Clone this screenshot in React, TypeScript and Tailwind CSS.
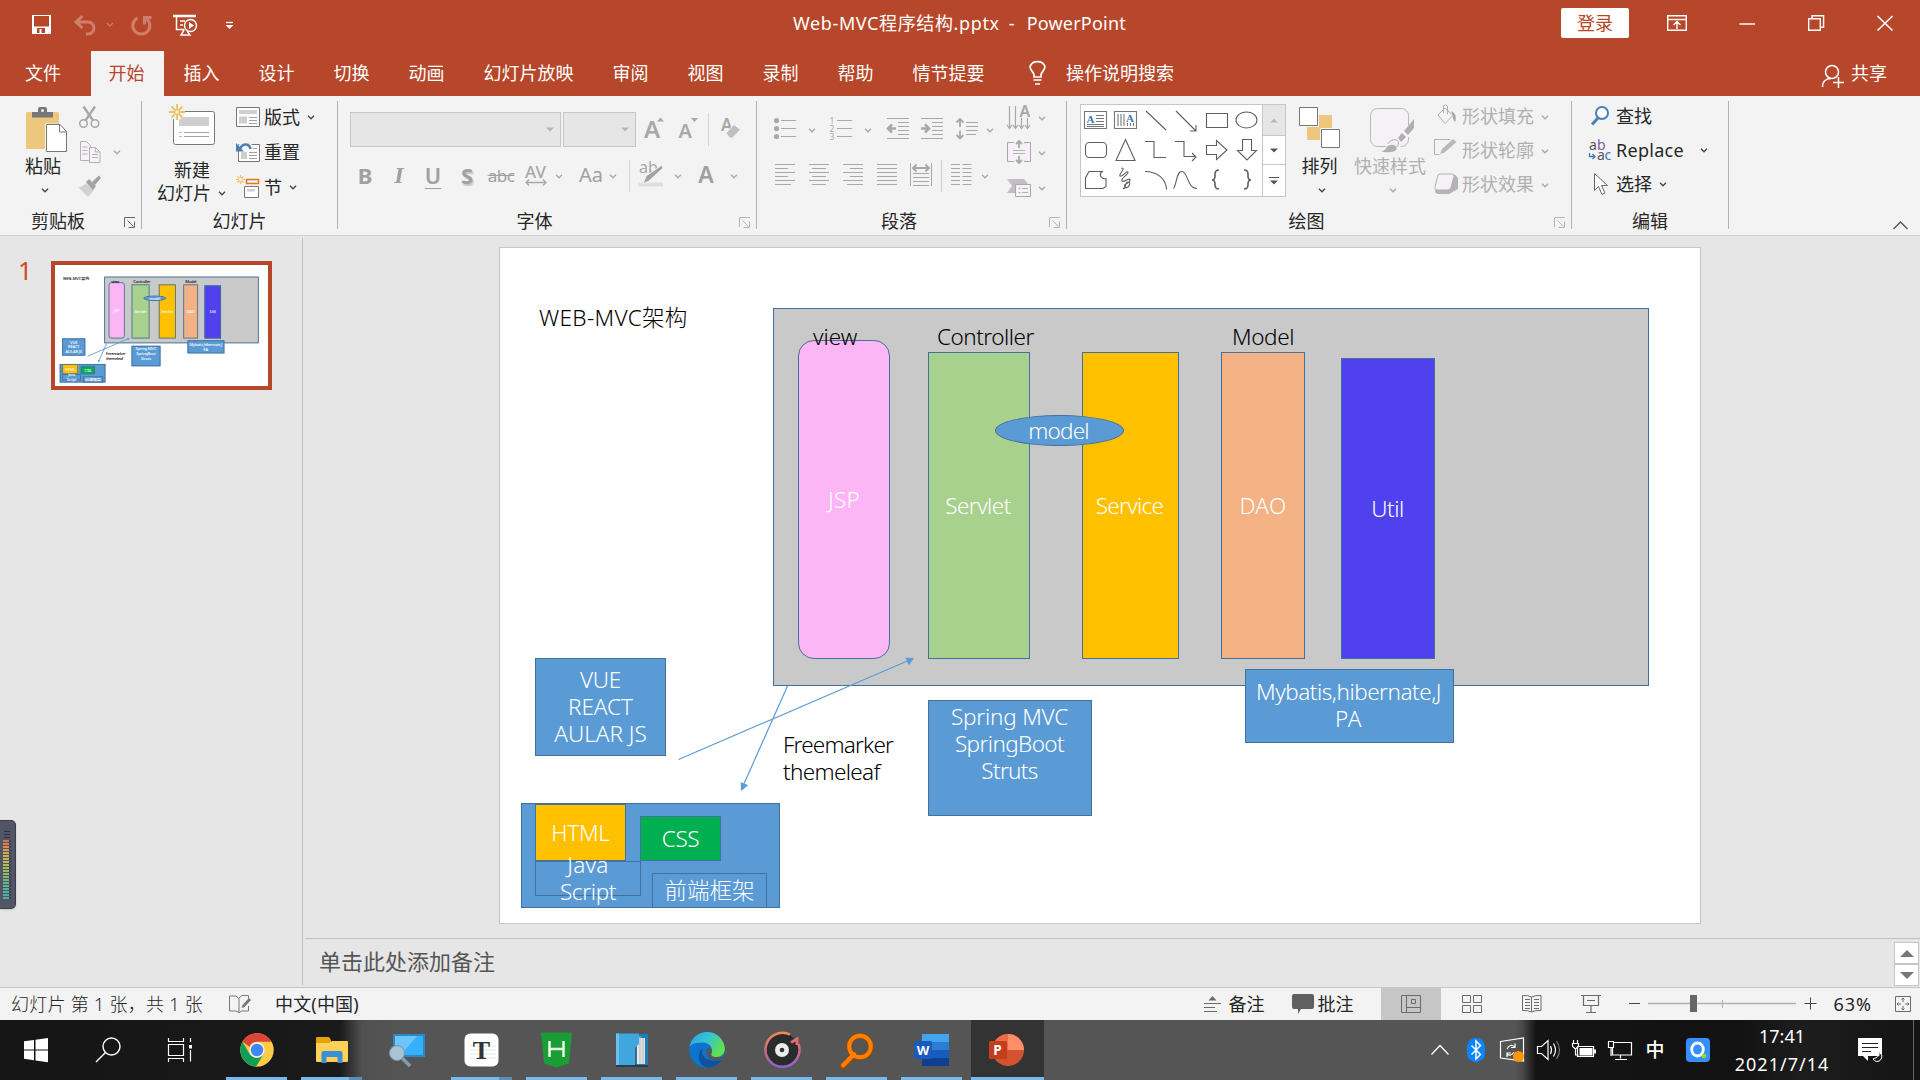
import React, { useLayoutEffect, useRef, useState } from 'react';

type Box = [number, number, number, number];

/* Icon whose drawing units are window pixels: b = [left, top, width, height]. */
function Ic({ b, className = '', children }: { b: Box; className?: string; children: React.ReactNode }) {
  return (
    <svg width={b[2]} height={b[3]} viewBox={b.join(' ')} fill="none" className={`block shrink-0 overflow-visible ${className}`}>
      {children}
    </svg>
  );
}

/* Single line of text tracked so that it fills the given width. */
function Fit({ w, children, className = '' }: { w: number; children: string; className?: string }) {
  const ref = useRef<HTMLSpanElement>(null);
  const [ls, setLs] = useState(0);
  useLayoutEffect(() => {
    if (ref.current && ls === 0) setLs((w - ref.current.offsetWidth) / children.length);
  }, []);
  return (
    <span ref={ref} style={{ letterSpacing: `${ls}px` }} className={`inline-block whitespace-pre ${className}`}>
      {children}
    </span>
  );
}

function Chev({ c = '#444', className = '' }: { c?: string; className?: string }) {
  return (
    <svg width="8" height="5" viewBox="0 0 8 5" fill="none" stroke={c} strokeWidth="1.3" className={`block shrink-0 ${className}`}>
      <path d="M1 .8 4 3.8 7 .8" />
    </svg>
  );
}

const G = '#a8a8a8';

function Group({ label, width, launcher, dim, children }: { label: string; width: string; launcher?: boolean; dim?: boolean; children: React.ReactNode }) {
  return (
    <>
      <div className={`flex shrink-0 flex-col ${width}`}>
        <div className="flex h-[114px] items-start">{children}</div>
        <div className="flex h-6 items-center">
          <div className="flex-1 pb-px text-center leading-[23px]">{label}</div>
          {launcher && (
            <svg width="25" height="14" viewBox="0 0 25 14" fill="none" stroke={dim ? '#b5b5b5' : '#666'} className="shrink-0">
              <path d="M8.500 12V2.500H19M11.500 5.500l6 6M18.500 6.500v6h-6" />
            </svg>
          )}
        </div>
      </div>
      <div className="mt-[5px] h-32 w-px shrink-0 bg-[#b3b3b3]" />
    </>
  );
}

function TitleBar() {
  return (
    <div className="flex h-[51px] items-start text-white">
      <div className="flex h-[50px] w-[793px] items-start">
        <Ic b={[30, 13, 23, 23]} className="mt-[13px] ml-[30px]">
          <path d="M32 15h19v19H32z" fill="#fff" />
          <path d="M34 16h15v10.500H34zM37 28h8v5h-8z" fill="#b7472a" />
          <path d="M39.500 29h2v4h-2z" fill="#fff" />
        </Ic>
        <Ic b={[72, 13, 42, 24]} className="mt-[13px] ml-[19px]">
          <g stroke="#cf7f6b" strokeWidth="3">
            <path d="M76 22h12a6 6 0 0 1 0 12h-2M82.500 16 76 22l6.500 6" />
            <path d="m107 23 3 3 3-3" strokeWidth="1.200" />
          </g>
        </Ic>
        <Ic b={[130, 13, 24, 24]} className="mt-[13px] ml-4">
          <path d="M137.500 18a8.500 8.500 0 1 0 8.500.5M151.500 17.500h-7v7" stroke="#cf7f6b" strokeWidth="3" />
        </Ic>
        <Ic b={[172, 13, 28, 26]} className="mt-[13px] ml-[18px]">
          <g stroke="#fff" strokeWidth="1.500">
            <path d="M173 16h23" strokeWidth="2.500" />
            <path d="M176.500 17v12.500h8M180 21h5M180 25h3M184 30l-3 5h9l-3-4" />
            <circle cx="190.500" cy="25.500" r="6" />
            <path d="m189 22 5 3.500-5 3.500z" fill="#fff" stroke="none" />
          </g>
        </Ic>
        <Ic b={[224, 18, 12, 12]} className="mt-[18px] ml-6">
          <path d="M226 22.500h7" stroke="#fff" strokeWidth="1.300" />
          <path d="M225.500 25h8l-4 4z" fill="#fff" />
        </Ic>
      </div>
      <div className="mt-[11px] flex leading-6">
        <Fit w={207}>Web-MVC程序结构.pptx</Fit>
        <span className="ml-[9px] w-[18px]">-</span>
        <Fit w={99}>PowerPoint</Fit>
      </div>
      <div className="mt-2 ml-auto flex h-[30px] w-[68px] items-center justify-center rounded-[2px] bg-white text-[#b7472a]">登录</div>
      <Ic b={[1666, 13, 22, 20]} className="mt-[13px] ml-[37px]">
        <g stroke="#fff" strokeWidth="1.400">
          <path d="M1667.700 15.700h18.600v14.600h-18.600zM1668 19.500h18M1677 29v-7M1673.500 25l3.500-3.500 3.500 3.500" />
        </g>
      </Ic>
      <Ic b={[1738, 13, 18, 20]} className="mt-[13px] ml-[50px]">
        <path d="M1739.500 24h15.500" stroke="#fff" strokeWidth="1.500" />
      </Ic>
      <Ic b={[1807, 13, 20, 20]} className="mt-[13px] ml-[51px]">
        <path d="M1808.700 18.700h11.600v11.600h-11.600zM1812 18.500v-2.800h11.600v11.600h-3" stroke="#fff" strokeWidth="1.400" />
      </Ic>
      <Ic b={[1876, 13, 20, 20]} className="mt-[13px] mr-6 ml-[49px]">
        <path d="m1877.500 16 15 14.500M1892.500 16l-15 14.500" stroke="#fff" strokeWidth="1.600" />
      </Ic>
    </div>
  );
}

const TABS = ['插入', '设计', '切换', '动画', '幻灯片放映', '审阅', '视图', '录制', '帮助', '情节提要'];

function Tabs() {
  return (
    <div className="flex h-[45px] items-stretch text-white">
      <div className="flex w-[91px] items-center pb-px pl-[25px]">文件</div>
      <div className="flex w-[73px] items-center justify-center bg-[#f3f3f3] pr-0.5 pb-px text-[#b7472a]">开始</div>
      <div className="flex">
        {TABS.map((t) => (
          <div key={t} className="flex items-center px-[19.5px] pb-px">{t}</div>
        ))}
      </div>
      <Ic b={[1026, 58, 22, 30]} className="mt-[7px] ml-[22px]">
        <g stroke="#fff" strokeWidth="1.700">
          <path d="M1034 77v-2c0-3-4-4.500-4-8.500a8 7.500 0 0 1 15 0c0 4-4 5.500-4 8.500v2zM1033.500 80h8M1035 84h5" />
        </g>
      </Ic>
      <div className="ml-[18px] flex items-center pb-px">操作说明搜索</div>
      <Ic b={[1821, 62, 26, 28]} className="mt-[11px] ml-auto">
        <g stroke="#fff" strokeWidth="1.500">
          <circle cx="1832" cy="72" r="6.500" />
          <path d="M1822.500 87c0-6 4-8.500 8.500-8.500M1838.500 77v11M1833 82.500h11" />
        </g>
      </Ic>
      <div className="mr-[33px] ml-1 flex items-center pb-px">共享</div>
    </div>
  );
}

function ClipboardGroup() {
  return (
    <Group label="剪贴板" width="w-[141px]" launcher>
      <div className="ml-4 flex w-14 flex-col items-center pt-2">
        <Ic b={[20, 104, 48, 50]}>
          <rect x="26" y="112" width="33" height="37" rx="1.500" fill="#eec77f" />
          <path d="M32 112h6v-3q0-2 2-2h5q2 0 2 2v3h6v5.500H32z" fill="#777" />
          <circle cx="42.500" cy="110.500" r="1.500" fill="#f3f3f3" />
          <path d="M45 123.500h15l7.500 7.500v22H45z" fill="#f3f3f3" />
          <path d="M46.500 124.500H60l6.500 7v20H46.500z" fill="#fff" stroke="#777" />
          <path d="M59.500 124.500v7.500h7" stroke="#777" />
        </Ic>
        <div className="pr-0.5 leading-6">粘贴</div>
        <Chev className="mt-[10px] ml-0.5" />
      </div>
      <div className="ml-[5px] flex flex-col pt-2">
        <Ic b={[77, 104, 26, 26]}>
          <g stroke={G} strokeWidth="1.500">
            <circle cx="83.500" cy="123.500" r="3.800" />
            <circle cx="95" cy="123.500" r="3.800" />
            <path d="m83.500 106.500 9.500 14M95 106.500l-9.500 14" strokeWidth="2.300" />
          </g>
        </Ic>
        <div className="mt-[9px] flex items-center gap-[10px]">
          <Ic b={[77, 139, 26, 26]}>
            <g stroke="#b5b0b5" fill="#f6f1f7">
              <path d="M80.500 141.500h6l4 4v15h-10zM82.500 147h5M82.500 150.500h5M82.500 154h5" />
              <path d="M89.500 147.500h6l4.500 4.500v10.500H89.500zM95.500 148v4h4M92 154.500h6M92 157.500h6" />
            </g>
          </Ic>
          <Chev c={G} />
        </div>
        <Ic b={[77, 175, 26, 26]} className="mt-[10px]">
          <path d="M78 187q5 0 8-4l8 7-6 7z" fill="#d6d0d6" />
          <path d="m86 182 3-3 7 7-3 4z" fill="#a2a2a2" />
          <path d="m92 182 7-6.500 2 2.500-6 7z" fill="#a2a2a2" />
        </Ic>
      </div>
    </Group>
  );
}

function SlidesGroup() {
  return (
    <Group label="幻灯片" width="w-[195px]">
      <div className="ml-[15px] flex w-[72px] flex-col items-center pt-1.5">
        <Ic b={[168, 102, 50, 46]}>
          <rect x="173.500" y="111.500" width="41" height="33" rx="2" fill="#fff" stroke="#777" />
          <path d="M179 117h30v9h-30z" fill="#cfcfcf" />
          <path d="M179.500 132.500h2M184 132.500h25M179.500 136.500h2M184 136.500h25" stroke="#a2a2a2" />
          <circle cx="177" cy="112" r="8" fill="#f3f3f3" />
          <path d="M177 104v5M177 115v5M169 112h5M180 112h5M171.500 106.500l3 3M179.500 114.500l3 3M182.500 106.500l-3 3M174.500 114.500l-3 3" stroke="#eec06a" strokeWidth="1.800" />
          <circle cx="177" cy="112" r="2.500" stroke="#eec06a" strokeWidth="1.500" />
        </Ic>
        <div className="mt-[11px] pr-0.5 leading-[23px]">新建</div>
        <div className="flex items-center gap-[7px] pr-[3px] leading-[23px]">
          幻灯片
          <Chev />
        </div>
      </div>
      <div className="ml-[7px] flex flex-col gap-[11px] pt-[9px]">
        <div className="flex h-6 items-center">
          <Ic b={[236, 105, 24, 24]}>
            <path d="M236.500 107.500h23v19h-23z" fill="#fff" stroke="#777" />
            <path d="M239 110h18v4h-18zM239 116.500h8v7h-8z" fill="#cfcfcf" />
            <path d="M249 117.500h8M249 120.500h8M249 123.500h8" stroke="#a2a2a2" />
          </Ic>
          <span className="ml-1">版式</span>
          <Chev className="ml-[7px]" />
        </div>
        <div className="flex h-6 items-center">
          <Ic b={[236, 140, 24, 24]}>
            <path d="M238.500 144.500h21v17h-21z" fill="#fff" stroke="#777" />
            <path d="M241 152h6v7h-6z" fill="#cfcfcf" />
            <path d="M250 148.500h7M249 152.500h8M249 155.500h8M249 158.500h8" stroke="#a2a2a2" />
            <path d="M250.500 149c-1-5-7-6-11 0" stroke="#f3f3f3" strokeWidth="6" />
            <path d="M250.500 149c-1-6-8-6.500-11 .5" stroke="#4a80b5" strokeWidth="2.500" />
            <path d="M236 143v8.500h8z" fill="#4a80b5" />
          </Ic>
          <span className="ml-1">重置</span>
        </div>
        <div className="flex h-6 items-center">
          <Ic b={[236, 175, 24, 24]}>
            <path d="M246.500 179.500h12v4h-12z" stroke="#e07a1e" strokeWidth="1.500" />
            <path d="M244.500 186.500h14v11h-14z" fill="#fff" stroke="#777" />
            <path d="M247 189h8v2.500h-8z" fill="#cfcfcf" />
            <path d="M240.500 175v3M240.500 181v3M236 179.500h3M242 179.500h3M237.500 176.500l2 2M241.500 180.500l2 2M243.500 176.500l-2 2M239.500 180.500l-2 2" stroke="#eec06a" strokeWidth="1.200" />
          </Ic>
          <span className="ml-1">节</span>
          <Chev className="ml-[7px]" />
        </div>
      </div>
    </Group>
  );
}

function Combo({ width }: { width: string }) {
  return (
    <div className={`flex h-[35px] items-center justify-end border border-[#c6c6c6] bg-[#e6e6e6] pr-1.5 ${width}`}>
      <svg width="8" height="5" viewBox="0 0 8 5"><path d="M0 .5h8l-4 4z" fill="#b5b5b5" /></svg>
    </div>
  );
}

function FontGroup() {
  return (
    <Group label="字体" width="w-[418px]" launcher dim>
      <div className="flex flex-col pt-4 text-[#a0a0a0]">
        <div className="flex h-[35px] items-start pl-3">
          <Combo width="w-[211px]" />
          <div className="w-0.5" />
          <Combo width="w-[73px]" />
          <Ic b={[642, 112, 24, 35]} className="ml-1.5">
            <text x="644" y="138" fontSize="24" fontWeight="600" fill={G} fontFamily="Noto Sans">A</text>
            <path d="M657 121.500h7l-3.500-4z" fill={G} />
          </Ic>
          <Ic b={[676, 112, 24, 35]} className="ml-2.5">
            <text x="678.500" y="138" fontSize="20" fontWeight="600" fill={G} fontFamily="Noto Sans">A</text>
            <path d="M691 118h7l-3.500 4z" fill={G} />
          </Ic>
          <div className="mt-px ml-2 h-[33px] w-px bg-[#d4d4d4]" />
          <Ic b={[719, 112, 24, 35]} className="ml-2.5">
            <text x="721" y="131" fontSize="17" fontWeight="600" fill={G} fontFamily="Noto Sans">A</text>
            <path d="m726 133 8-8.500 6.500 5-8 8.500h-3z" fill="#c2bdc2" stroke="#f3f3f3" />
          </Ic>
        </div>
        <div className="mt-[13px] flex h-8 items-center pl-2.5 text-[22px] leading-none">
          <span className="w-[34px] pb-[3px] text-center font-bold">B</span>
          <span className="w-[34px] pb-[3px] text-center font-['Liberation_Serif'] text-[24px] font-bold italic">I</span>
          <span className="w-[34px] pb-[3px] text-center font-semibold underline decoration-1 underline-offset-4">U</span>
          <span className="w-[34px] pb-[3px] text-center font-bold [text-shadow:1.5px_1.5px_1px_#c8c8c8]">S</span>
          <span className="w-[34px] pb-0.5 text-center text-[17px] tracking-[-0.5px] line-through">abc</span>
          <Ic b={[518, 160, 34, 32]}>
            <text x="525" y="178" fontSize="17" fontWeight="500" fill={G} fontFamily="Noto Sans" textLength="21">AV</text>
            <path d="M526 182.500h20M529 179.500l-3 3 3 3M543 179.500l3 3-3 3" stroke={G} strokeWidth="1.300" />
          </Ic>
          <Chev c={G} className="ml-[3px]" />
          <span className="ml-[13px] w-[30px] pb-0.5 text-center text-[20px]">Aa</span>
          <Chev c={G} className="ml-[3px]" />
          <div className="ml-[12px] h-8 w-px bg-[#d4d4d4]" />
          <Ic b={[638, 160, 28, 32]} className="ml-2">
            <text x="639" y="173" fontSize="16" fill={G} fontFamily="Noto Sans">ab</text>
            <path d="M638 182.500h25v4h-25z" fill="#e3dce3" />
            <path d="m643 184 3-8 16-11 1 3-14 13z" fill="#a2a2a2" stroke="#f3f3f3" />
          </Ic>
          <Chev c={G} className="ml-2" />
          <span className="ml-3 w-6 pb-[3px] text-center text-[23px] font-semibold">A</span>
          <Chev c={G} className="ml-3" />
        </div>
      </div>
    </Group>
  );
}

function ParagraphGroup() {
  return (
    <Group label="段落" width="w-[309px]" launcher dim>
      <div className="ml-[15px] flex w-[228px] flex-col pt-4">
        <div className="flex h-9 items-center">
          <Ic b={[772, 112, 26, 34]}>
            <path d="M781 119.500h15M781 127.500h15M781 135.500h15" stroke={G} />
            <circle cx="776.500" cy="119.500" r="2.600" fill={G} />
            <circle cx="776.500" cy="127.500" r="2.600" fill={G} />
            <circle cx="776.500" cy="135.500" r="2.600" fill={G} />
          </Ic>
          <Chev c={G} className="ml-2.5" />
          <Ic b={[828, 112, 26, 34]} className="ml-3">
            <path d="M837 119.500h15M837 127.500h15M837 135.500h15" stroke={G} />
            <g fontSize="8.500" fill={G} fontFamily="Noto Sans">
              <text x="829.500" y="123">1</text>
              <text x="829.500" y="131">2</text>
              <text x="829.500" y="139">3</text>
            </g>
          </Ic>
          <Chev c={G} className="ml-2.5" />
          <Ic b={[884, 112, 26, 34]} className="ml-3">
            <path d="M887 117.500h22M898 121.500h11M898 125.500h11M898 129.500h11M898 133.500h11M887 137.500h22" stroke={G} />
            <path d="M896 127.500h-8M892 123.500l-4 4 4 4" stroke={G} strokeWidth="2.500" />
          </Ic>
          <Ic b={[918, 112, 26, 34]} className="ml-2">
            <path d="M921 117.500h22M932 121.500h11M932 125.500h11M932 129.500h11M932 133.500h11M921 137.500h22" stroke={G} />
            <path d="M921 127.500h8M925 123.500l4 4-4 4" stroke={G} strokeWidth="2.500" />
          </Ic>
          <Ic b={[954, 112, 26, 34]} className="ml-2.5">
            <path d="M966 121.500h12M966 125.500h12M966 129.500h12M966 133.500h10" stroke={G} />
            <path d="M960 118v8M956.500 121.500l3.500-3.500 3.500 3.500M960 129.500v8M956.500 134l3.500 3.500 3.500-3.500" stroke={G} strokeWidth="1.800" />
          </Ic>
          <Chev c={G} className="ml-1.5" />
        </div>
        <div className="mt-3 flex h-8 items-center">
          <Ic b={[772, 160, 24, 32]}><path d="M775 164.500h20M775 168.500h13M775 172.500h20M775 176.500h13M775 180.500h20M775 184.500h16" stroke={G} /></Ic>
          <Ic b={[806, 160, 24, 32]} className="ml-2.5"><path d="M809 164.500h20M812 168.500h14M809 172.500h20M812 176.500h14M809 180.500h20M812 184.500h14" stroke={G} /></Ic>
          <Ic b={[840, 160, 24, 32]} className="ml-2.5"><path d="M843 164.500h20M850 168.500h13M843 172.500h20M850 176.500h13M843 180.500h20M847 184.500h16" stroke={G} /></Ic>
          <Ic b={[874, 160, 24, 32]} className="ml-2.5"><path d="M877 164.500h20M877 168.500h20M877 172.500h20M877 176.500h20M877 180.500h20M877 184.500h20" stroke={G} /></Ic>
          <Ic b={[908, 160, 24, 32]} className="ml-2.5">
            <path d="M910.500 163v23M931.500 163v23M913 173.500h16M913 177.500h16M913 181.500h16M913 185.500h16" stroke={G} />
            <path d="M913 168h16M916.500 164.500 913 168l3.500 3.500M925.500 164.500l3.500 3.500-3.500 3.500" stroke={G} strokeWidth="2" />
          </Ic>
          <div className="ml-[9px] h-8 w-px bg-[#d0d0d0]" />
          <Ic b={[949, 160, 24, 32]} className="ml-[7px]"><path d="M951 164.500h9M962.500 164.500h9M951 168.500h9M962.500 168.500h9M951 172.500h9M962.500 172.500h9M951 176.500h9M962.500 176.500h9M951 180.500h9M962.500 180.500h9M951 184.500h9M962.500 184.500h9" stroke={G} /></Ic>
          <Chev c={G} className="ml-2" />
        </div>
      </div>
      <div className="ml-[5px] flex flex-col gap-[7px] pt-2">
        <div className="flex h-7 items-center gap-[5px]">
          <Ic b={[1005, 104, 28, 28]}>
            <path d="M1009.500 106v22M1007 125l2.500 3.500 2.500-3.500M1015.500 106v22M1013 125l2.500 3.500 2.500-3.500M1021.500 118v10M1019 125l2.500 3.500 2.500-3.500M1027.500 118v10M1025 125l2.500 3.500 2.500-3.500" stroke={G} strokeWidth="1.200" />
            <text x="1019.500" y="117" fontSize="16" fontWeight="600" fill={G} fontFamily="Noto Sans">A</text>
          </Ic>
          <Chev c={G} />
        </div>
        <div className="flex h-7 items-center gap-[5px]">
          <Ic b={[1005, 139, 28, 28]}>
            <path d="M1014 142.500h-6.500v19h6.500M1024 142.500h6.500v19h-6.500" stroke={G} fill="#f6f1f7" />
            <path d="M1013 150.500h12M1013 153.500h12" stroke="#b5b0b5" />
            <path d="M1019 148v-7M1016 144l3-3 3 3M1019 156v7M1016 160l3 3 3-3" stroke={G} strokeWidth="1.800" />
          </Ic>
          <Chev c={G} />
        </div>
        <div className="flex h-7 items-center gap-[5px]">
          <Ic b={[1005, 174, 28, 28]}>
            <path d="M1007 179h17l6 7-6 7h-17l5-7z" fill="#c2bfc2" />
            <path d="M1015.500 184.500h15v12h-15z" fill="#f6f1f7" stroke={G} />
            <path d="M1018.500 188.500h2M1022 188.500h6M1018.500 192.500h2M1022 192.500h6" stroke="#b5b0b5" />
          </Ic>
          <Chev c={G} />
        </div>
      </div>
    </Group>
  );
}

/* Shape gallery glyphs, each on a 30 x 30 tile. */
const SHAPES: React.ReactNode[] = [
  <><path d="M4.500 6.500h22v17h-22zM16 10.500h8M16 13.500h8M16 16.500h8M7 19.500h17M7 21.500h17" stroke="#777" /><text x="6.500" y="17.500" fontSize="11" fontWeight="bold" fill="#3b78b8" stroke="none" fontFamily="Liberation Serif">A</text></>,
  <><path d="M4.500 6.500h22v17h-22zM8 9v12M11 9v12M14 9v12M17.500 18v3M20.500 18v3M23.500 18v3" stroke="#777" /><text x="16" y="17" fontSize="11" fontWeight="bold" fill="#3b78b8" stroke="none" fontFamily="Liberation Serif">A</text></>,
  <path d="m6 6 20 19" />,
  <path d="m6 6 20 20M26 20v6h-6" />,
  <path d="M5.500 8.500h21v14h-21z" />,
  <ellipse cx="15.500" cy="15" rx="10.500" ry="8" />,
  <rect x="5.500" y="7.500" width="21" height="15" rx="4" />,
  <path d="M15.500 4.500 25 25.500H6z" />,
  <path d="M5 6.500h9v16h12" />,
  <path d="M5 6.500h9v15h12M22 18l4 4-4 4" />,
  <path d="M5.500 10.500h10v-5L26 15l-10.500 9.500v-5h-10z" />,
  <path d="M11.500 4.500h9v11h5l-9.500 9.500-9.500-9.500h5z" />,
  <path d="M9 6.500h14l-2 1c-2 3 1 7 5 6v8l-3 2H5.500V13z" />,
  <path d="M11 3c6 0-3 6-1 8s7-6 8-4-8 7-6 9 7-4 8-1-8 4-5 7 7-5 3-5-2 9-5 6" />,
  <path d="M5 6.500c12 0 21 7 21.500 18" />,
  <path d="M3.500 23.500C7 19 6 6.500 12 6.500s5 17 15 17" />,
  <path d="M18 5q-4 0-4 4v2q0 4-3 4 3 0 3 4v1q0 4 4 4" strokeWidth="1.600" />,
  <path d="M13 5q4 0 4 4v2q0 4 3 4-3 0-3 4v1q0 4-4 4" strokeWidth="1.600" />,
];

function DrawingGroup() {
  return (
    <Group label="绘图" width="w-[504px]" launcher dim>
      <div className="mt-2 ml-[13px] flex h-[93px] w-[206px] border border-[#c6c6c6] bg-white">
        <div className="grid w-[181px] shrink-0 grid-cols-6 content-start">
          {SHAPES.map((s, i) => (
            <svg key={i} width="30" height="30" viewBox="1 0 30 30" fill="none" stroke="#5f5f5f" strokeWidth="1.100" className="block">
              {s}
            </svg>
          ))}
        </div>
        <div className="flex flex-1 flex-col border-l border-[#c6c6c6]">
          <div className="flex h-[31px] items-center justify-center border-b border-[#c6c6c6] bg-[#e6e6e6]">
            <svg width="8" height="5"><path d="M0 4.500h8l-4-4z" fill="#bbb" /></svg>
          </div>
          <div className="flex h-[29px] items-center justify-center border-b border-[#c6c6c6]">
            <svg width="8" height="5"><path d="M0 .5h8l-4 4z" fill="#555" /></svg>
          </div>
          <div className="flex flex-1 items-center justify-center">
            <svg width="10" height="8"><path d="M0 .5h10" stroke="#555" /><path d="M1 3.500h8l-4 4z" fill="#555" /></svg>
          </div>
        </div>
      </div>
      <div className="ml-[9px] flex w-[50px] flex-col items-center pt-2">
        <Ic b={[1296, 104, 48, 50]}>
          <path d="M1319 115h13v13h-13zM1307 127h13v13h-13z" fill="#eec77f" />
          <path d="M1299.500 107.500h18v18h-18zM1321.500 129.500h18v18h-18z" fill="#fff" stroke="#777" />
        </Ic>
        <div className="pr-px leading-6">排列</div>
        <Chev className="mt-[10px] ml-1" />
      </div>
      <div className="ml-[7px] flex w-[76px] flex-col items-center pt-2 text-[#b0b0b0]">
        <Ic b={[1366, 104, 48, 50]}>
          <rect x="1370.500" y="108.500" width="38" height="38" rx="7" fill="#f6f1f7" stroke="#b8b8b8" />
          <path d="M1380 152q5-1 6-6c1-4 6-7 10-6l18-21v12l-13 15-4 4q-5 5-17 2z" fill="#f3f3f3" />
          <path d="M1381 151.500q5-1 6-5 4-3 8-1c4 4 0 6-4 6.500q-6 .5-10-.5zM1398 138l4-5 4 4-5 5zM1404 131l10-12v9l-6 7z" fill="#b0b0b0" />
          <path d="M1388 144c2-5 9-5 10-3s0 6-4 8" stroke="#b0b0b0" />
        </Ic>
        <div className="leading-6 whitespace-nowrap">快速样式</div>
        <Chev c={G} className="mt-[10px] ml-1.5" />
      </div>
      <div className="ml-[3px] flex flex-col gap-1.5 pt-[7px] text-[#b0b0b0]">
        <div className="flex h-7 items-center">
          <Ic b={[1431, 103, 28, 28]}>
            <path d="m1438 115 7-7 8 7.500-8 8z" fill="#f6f1f7" stroke="#b0b0b0" />
            <path d="M1443.500 113v-7q2-2 4 0v8" stroke="#b0b0b0" />
            <path d="M1451 111q6 2 4.500 11-3-2-2.500-6z" fill="#a8a8a8" />
          </Ic>
          <span className="ml-[3px] pb-px">形状填充</span>
          <Chev c={G} className="ml-[7px]" />
        </div>
        <div className="flex h-7 items-center">
          <Ic b={[1431, 137, 28, 28]}>
            <path d="M1450 139.500h-15.500v15h5" stroke="#b0b0b0" />
            <path d="m1440 154 2-5 11-10 3.500 3-12 10.500z" fill="#b8b8b8" />
          </Ic>
          <span className="ml-[3px] pb-px">形状轮廓</span>
          <Chev c={G} className="ml-[7px]" />
        </div>
        <div className="flex h-7 items-center">
          <Ic b={[1431, 171, 28, 28]}>
            <path d="M1435 190.500q0 3 3 3.500h11l9-5v-11l-3-3.500z" fill="#b4b4b4" />
            <path d="M1440 174h12q2.500 0 2 2.500l-3 11q-.5 2.500-3 2.500h-11q-2.500 0-2-2.500l2.500-11q.5-2.500 2.500-2.500z" fill="#f6f1f7" stroke="#b0b0b0" />
          </Ic>
          <span className="ml-[3px] pb-px">形状效果</span>
          <Chev c={G} className="ml-[7px]" />
        </div>
      </div>
    </Group>
  );
}

function EditingGroup() {
  return (
    <Group label="编辑" width="w-[156px]">
      <div className="ml-4 flex flex-col gap-1.5 pt-1.5">
        <div className="flex h-7 items-center">
          <Ic b={[1588, 102, 27, 28]}>
            <circle cx="1602" cy="113" r="6" fill="#fff" stroke="#4a7ebb" strokeWidth="2" />
            <path d="m1598 118-6 6.500" stroke="#4a7ebb" strokeWidth="3" />
          </Ic>
          <span className="ml-px">查找</span>
        </div>
        <div className="flex h-7 items-center">
          <Ic b={[1588, 136, 27, 28]}>
            <g fontSize="14" fontFamily="Noto Sans" fill="#555">
              <text x="1589" y="150">a</text>
              <text x="1597" y="150" fill="#8b57a8">b</text>
              <text x="1597" y="160">a</text>
              <text x="1604.500" y="160" fill="#3b78b8">c</text>
            </g>
            <path d="M1589.500 153v3.500h5M1592.500 154l2.500 2.500-2.500 2.500" stroke="#3b78b8" strokeWidth="1.300" />
          </Ic>
          <Fit w={68} className="ml-px">Replace</Fit>
          <Chev className="ml-[16px]" />
        </div>
        <div className="flex h-7 items-center">
          <Ic b={[1588, 170, 27, 28]}>
            <path d="M1594.500 173.500v17l4-4 3.500 8 3-1.500-3.500-7.500h6z" fill="#fff" stroke="#666" />
          </Ic>
          <span className="ml-px">选择</span>
          <Chev className="ml-[7px]" />
        </div>
      </div>
    </Group>
  );
}

function Ribbon() {
  return (
    <div className="flex h-[140px] border-b border-[#d2d2d2] bg-[#f3f3f3] text-[#262626]">
      <ClipboardGroup />
      <SlidesGroup />
      <FontGroup />
      <ParagraphGroup />
      <DrawingGroup />
      <EditingGroup />
      <Ic b={[1891, 220, 18, 10]} className="mt-[124px] mr-[11px] ml-auto">
        <path d="m1893.500 229 7-7 7 7" stroke="#555" strokeWidth="1.400" />
      </Ic>
    </div>
  );
}

/* Shapes of the slide, placed on its free canvas. */
const BLUE = 'bg-[#5b9bd5] text-white';
const BOXES: { c: string; t?: [string, number][] }[] = [
  { c: 'left-[273px] top-[60px] w-[876px] h-[378px] bg-[#c9c9c9]' },
  { c: 'left-[298px] top-[92px] w-[92px] h-[319px] rounded-[16px] bg-[#fcb6f5] pb-px text-white', t: [['JSP', 32]] },
  { c: 'left-[428px] top-[104px] w-[102px] h-[307px] bg-[#a9d18e] pr-0.5 text-white', t: [['Servlet', 65]] },
  { c: 'left-[582px] top-[104px] w-[97px] h-[307px] bg-[#ffc000] pr-0.5 text-white', t: [['Service', 68]] },
  { c: 'left-[721px] top-[104px] w-[84px] h-[307px] bg-[#f4b183] text-white', t: [['DAO', 47]] },
  { c: 'left-[841px] top-[110px] w-[94px] h-[301px] bg-[#4f42ee] pr-px text-white', t: [['Util', 32]] },
  { c: `left-[495px] top-[167px] w-[129px] h-[31px] rounded-[50%] pr-0.5 ${BLUE}`, t: [['model', 61]] },
  { c: `left-[745px] top-[421px] w-[209px] h-[74px] pr-0.5 pb-0.5 ${BLUE}`, t: [['Mybatis,hibernate,J', 185], ['PA', 27]] },
  { c: `left-[428px] top-[452px] w-[164px] h-[116px] pr-px pb-[29px] ${BLUE}`, t: [['Spring MVC', 117], ['SpringBoot', 109], ['Struts', 56]] },
  { c: `left-[35px] top-[410px] w-[131px] h-[98px] pb-0.5 ${BLUE}`, t: [['VUE', 41], ['REACT', 65], ['AULAR JS', 93]] },
  { c: `left-[21px] top-[555px] w-[259px] h-[105px] ${BLUE}` },
  { c: 'left-[35px] top-[556px] w-[91px] h-[57px] bg-[#ffc000] pb-px text-white', t: [['HTML', 58]] },
  { c: 'left-[140px] top-[568px] w-[81px] h-[45px] bg-[#00b050] pb-px text-white', t: [['CSS', 38]] },
  { c: 'left-[35px] top-[613px] w-[106px] h-[35px] pb-0.5 text-white', t: [['Java', 41], ['Script', 56]] },
  { c: 'left-[152px] top-[625px] w-[115px] h-[35px] text-white', t: [['前端框架', 90]] },
];

function Slide({ thumb }: { thumb?: boolean }) {
  return (
    <div className={`relative h-[675px] w-[1200px] bg-white text-[22.5px] leading-[27px] text-black ${thumb ? 'font-medium' : 'font-light'}`}>
      {BOXES.map((b, i) => (
        <div key={i} className={`absolute flex flex-col items-center justify-center border-[#41719c] ${thumb ? 'border-[5px]' : 'border'} ${b.c}`}>
          {b.t?.map(([s, w]) => <Fit key={s} w={w} className="shrink-0">{s}</Fit>)}
        </div>
      ))}
      <Fit w={149} className="absolute top-[56px] left-[39px]">WEB-MVC架构</Fit>
      <Fit w={44} className="absolute top-[75px] left-[313px]">view</Fit>
      <Fit w={97} className="absolute top-[75px] left-[437px]">Controller</Fit>
      <Fit w={62} className="absolute top-[75px] left-[732px]">Model</Fit>
      <div className="absolute top-[483px] left-[283px] flex flex-col items-start">
        <Fit w={110}>Freemarker</Fit>
        <Fit w={97}>themeleaf</Fit>
      </div>
      <svg width="1200" height="675" viewBox="500 248 1200 675" className="absolute top-0 left-0" stroke="#5b9bd5" strokeWidth={thumb ? 5 : 1.2} fill="#5b9bd5">
        <path d="m678.500 759.500 230-99M787.500 686 743 786" />
        <path d="m914 658-8.500-.3 3.300 7.500zM741 791l-.3-9 7.500 3.300z" strokeWidth={thumb ? 5 : 0} />
      </svg>
    </div>
  );
}

const LED = ['#d9705a', '#dc7d55', '#de8a52', '#dc9a50', '#d8a84f', '#d3b04e', '#cbb650', '#c0b954', '#b3ba58', '#a6ba5d', '#9aba64', '#8dba6b', '#80b973', '#74b87b', '#69b784', '#60b68d', '#58b596', '#52b49e', '#4db3a3', '#4ab2a6'];

function Workspace() {
  return (
    <div className="flex h-[751px] bg-[#e6e6e6]">
      <div className="relative flex w-[302px] items-start">
        <div className="mt-[21px] w-[51px] pl-[18px] text-[25px] leading-[26px] text-[#d24726]">1</div>
        <div className="mt-[25px] h-[129px] w-[221px] border-4 border-[#b7472a]">
          <div className="h-[121px] w-[213px] overflow-hidden bg-white pt-px pl-px">
            <div className="h-[675px] w-[1200px] origin-top-left scale-[0.1765]">
              <Slide thumb />
            </div>
          </div>
        </div>
        <div className="absolute top-[584px] left-0 flex h-[89px] w-4 flex-col rounded-r-[5px] border border-l-0 border-[#3a3d48] bg-[#525565] pt-2.5 pl-[3px] shadow-sm">
          <div className="mb-px ml-px h-[8px] w-[6px] bg-[repeating-linear-gradient(#2c2e38_0_1px,#525565_1px_3px)]" />
          {LED.map((c) => (
            <div key={c} className="mb-px flex h-[2px] w-2">
              <div className="h-full w-1.5 shrink-0" style={{ backgroundColor: c }} />
              <div className="h-full w-2 bg-[#3c3f4b]" />
            </div>
          ))}
        </div>
      </div>
      <div className="mt-[2px] mb-[2px] w-px bg-[#c0c0c0]" />
      <div className="flex flex-1 flex-col pl-0.5">
        <div className="flex h-[702px] pt-[11px] pl-[194px]">
          <div className="h-[677px] w-[1202px] border border-[#c6c6c6]">
            <Slide />
          </div>
        </div>
        <div className="flex h-[49px] items-start justify-between border-t border-[#c0c0c0]">
          <div className="mt-[7px] ml-[14px] text-[22px] leading-[30px] text-[#555]">单击此处添加备注</div>
          <div className="mt-[3px] mr-px flex w-[25px] flex-col">
            <div className="flex h-[22px] items-center justify-center border border-[#c6c6c6] bg-white">
              <svg width="14" height="7"><path d="M0 7h14L7 0z" fill="#777" /></svg>
            </div>
            <div className="flex h-[22px] items-center justify-center border border-[#c6c6c6] bg-white">
              <svg width="14" height="7"><path d="M0 0h14L7 7z" fill="#777" /></svg>
            </div>
          </div>
        </div>
      </div>
    </div>
  );
}

function StatusBar() {
  const s = '#6a6a6a';
  return (
    <div className="flex h-[33px] items-center border-t border-[#c6c6c6] bg-[#f3f3f3] leading-6 text-[#262626]">
      <div className="w-[228px] pl-[11px] font-light"><Fit w={192}>幻灯片 第 1 张，共 1 张</Fit></div>
      <Ic b={[228, 992, 24, 24]}>
        <path d="M239 1012.500v-14l-3-2.500h-6.500v15h6.500zM239 998l3-2.500h6.500v3M248.500 1006v5h-7l-2.500 2" stroke="#777" />
        <path d="m241.500 1008 1-3 6.500-7 2 2-6.500 7z" fill="#777" />
      </Ic>
      <Fit w={84} className="mb-px ml-[23px]">中文(中国)</Fit>
      <div className="flex-1" />
      <Ic b={[1203, 992, 20, 24]}>
        <path d="M1204 1003.500h17M1204 1007.500h11M1204 1011.500h13" stroke={s} />
        <path d="M1208.500 1000.500h8l-4-4.500z" fill={s} />
      </Ic>
      <span className="mb-px ml-[5px]">备注</span>
      <Ic b={[1290, 992, 26, 24]} className="ml-[26px]">
        <path d="M1294 994h18q2 0 2 2v11q0 2-2 2h-11l-3 5v-5h-4q-2 0-2-2v-11q0-2 2-2z" fill="#606060" />
      </Ic>
      <span className="mb-px ml-px">批注</span>
      <div className="ml-[28px] flex h-full w-[60px] items-center justify-center bg-[#c6c6c6]">
        <Ic b={[1401, 994, 22, 20]}>
          <path d="M1402.500 995.500h19v17h-19zM1407.500 996v16M1408 1007.500h13M1412.500 999.500h4v4h-4z" stroke={s} />
        </Ic>
      </div>
      <div className="flex h-full w-[60px] items-center justify-center">
        <Ic b={[1460, 994, 22, 20]}>
          <path d="M1462.500 995.500h8v7h-8zM1473.500 995.500h8v7h-8zM1462.500 1005.500h8v7h-8zM1473.500 1005.500h8v7h-8z" stroke={s} />
        </Ic>
      </div>
      <div className="flex h-full w-[60px] items-center justify-center">
        <Ic b={[1520, 994, 22, 20]}>
          <path d="M1531.500 997q-3.500-2-9-1.500v15q5.500-.5 9 1.500 4-2 9.500-1.500v-15q-5.500-.5-9.500 1.500zv15M1525 999.500h5M1525 1002.500h5M1525 1005.500h5M1525 1008.500h5M1534 999.500h5M1534 1002.500h5M1534 1005.500h5M1534 1008.500h5" stroke={s} />
        </Ic>
      </div>
      <div className="flex h-full w-[60px] items-center justify-center">
        <Ic b={[1581, 994, 22, 20]}>
          <path d="M1582 995.500h20M1584.500 996v9.500h15V996M1588 1000.500h8M1592 1006v6M1587 1012.500h10" stroke={s} strokeWidth="1.200" />
        </Ic>
      </div>
      <Ic b={[1628, 994, 190, 20]} className="ml-[6px]">
        <path d="M1630 1003.500h11M1805.500 1003.500h12M1811.500 997.500v12" stroke="#444" />
        <path d="M1649 1003.500h148" stroke="#b0b0b0" strokeWidth="1.500" />
        <path d="M1723.500 1000v8" stroke="#b0b0b0" />
        <path d="M1691 995h7v17h-7z" fill="#666" />
      </Ic>
      <Fit w={39} className="mb-px ml-4">63%</Fit>
      <Ic b={[1895, 994, 18, 20]} className="mr-[8px] ml-[22px]">
        <path d="M1896.500 996.500h15v15h-15zM1904 998v4M1904 1006v4M1898 1004h4M1906 1004h4M1902.500 999.500l1.500-1.500 1.500 1.500M1902.500 1008.500l1.500 1.500 1.500-1.500M1899.500 1002.500l-1.500 1.500 1.500 1.500M1908.500 1002.500l1.500 1.500-1.500 1.500" stroke={s} />
      </Ic>
    </div>
  );
}

/* Running applications; every drawing is 40 x 40. */
const APPS: { name: string; art: React.ReactNode; open?: 'one' | 'many'; active?: boolean }[] = [
  {
    name: 'chrome', open: 'one',
    art: <>
      <circle cx="20" cy="20" r="16.700" fill="#fc4" />
      <path d="M5.500 11.700A16.700 16.700 0 0 1 34.500 11.700H20a8.300 8.300 0 0 0-7.500 5z" fill="#db4437" />
      <path d="M5.500 11.700A16.700 16.700 0 0 0 19 36.700l7.500-12.500a8.300 8.300 0 0 1-13.700 0z" fill="#0f9d58" />
      <circle cx="20" cy="20" r="7.700" fill="#f3f3f3" />
      <circle cx="20" cy="20" r="6.200" fill="#4285f4" />
    </>,
  },
  {
    name: 'explorer', open: 'many',
    art: <>
      <path d="M4 8q0-1 1-1h12l2 3v6H4z" fill="#e5a20a" />
      <path d="M4 13h13l3-2h15q1 0 1 1v19q0 1-1 1H5q-1 0-1-1z" fill="#ffd257" />
      <path d="M9.500 33V23q0-2 2-2h17q2 0 2 2v10h-5v-6h-11v6z" fill="#3b8fd9" />
    </>,
  },
  {
    name: 'magnifier',
    art: <>
      <path d="M6 4h32v23H6z" fill="#2f86c4" />
      <path d="M8 6h28v19H8z" fill="#36b0fb" />
      <path d="M8 6h22L14 25H8z" fill="#6cc5fb" />
      <path d="m15 28 8 8" stroke="#7e9db5" strokeWidth="3.500" />
      <circle cx="10" cy="23" r="7.500" fill="#a9c3d4" stroke="#7394aa" />
    </>,
  },
  {
    name: 'typora', open: 'many',
    art: <>
      <rect x="2.500" y="3.500" width="34" height="33" rx="6" fill="#fff" />
      <path d="M8 16h26M8 20h26M8 24h26M8 28h26" stroke="#e4e4e4" />
      <text x="19.500" y="28.500" textAnchor="middle" fontSize="26" fontWeight="bold" fontFamily="Liberation Serif" fill="#333">T</text>
    </>,
  },
  {
    name: 'hbuilder', open: 'one',
    art: <>
      <path d="M4 2.500h31l-3 31L19.500 37.500 7 33.500z" fill="#1c9c34" />
      <path d="M12.500 11v16M26.500 11v16M12.500 19h14" stroke="#e8ffe8" strokeWidth="2.500" />
    </>,
  },
  {
    name: 'notebook', open: 'one',
    art: <>
      <path d="M4 34h32v3H4z" fill="#2b3b47" />
      <path d="M24 4h12v31H24z" fill="#1e7fb8" />
      <path d="M25 8h8v26h-8z" fill="#e6e6e6" />
      <path d="M28 6v28M31 8v26" stroke="#b5b5b5" />
      <path d="M4 3.500h23V14l-4 4v17H4z" fill="#3fa6e0" />
      <path d="M4 3.500h3v31.500H4z" fill="#6cc0ef" />
    </>,
  },
  {
    name: 'edge', open: 'one',
    art: <>
      <defs>
        <linearGradient id="edge-top" x1="0" y1="0" x2="1" y2=".5">
          <stop offset="0" stopColor="#2a9fe0" />
          <stop offset=".5" stopColor="#34c3d6" />
          <stop offset="1" stopColor="#62e04f" />
        </linearGradient>
      </defs>
      <circle cx="20" cy="20" r="17.800" fill="#0c74cf" />
      <path d="M2.500 17A17.800 17.800 0 0 1 37.800 18c.5 6-4 9-8.500 9-4 0-6-1.500-4.500-4 2-6-4-11-10-10.500S5 13 2.500 17z" fill="url(#edge-top)" />
      <path d="M15 18c-2 9 6 15 20 12-4 5-9 7.500-15 7.500-8-2-11-12-5-19.500z" fill="#10519c" />
      <path d="M22 17c-5 3-3 11 4 13 4 1 8-.5 9-1l5 2V27H29c-4 0-6-1.500-4.500-4 .6-2.500-.5-4-2.500-6z" fill="#555" />
    </>,
  },
  {
    name: 'groove', open: 'one',
    art: <>
      <defs>
        <linearGradient id="groove-ring" x1="0" y1="0" x2="0" y2="1">
          <stop offset="0" stopColor="#f58b4c" />
          <stop offset=".5" stopColor="#d06a86" />
          <stop offset="1" stopColor="#8a63c9" />
        </linearGradient>
      </defs>
      <path d="M28 4.500A17 17 0 1 0 36.500 14" fill="#2b2b2b" stroke="url(#groove-ring)" strokeWidth="2.500" />
      <path d="M20 5a15 15 0 0 1 13 8l-10 8z" fill="#2b2b2b" />
      <circle cx="20" cy="20" r="7" fill="#ececec" />
      <circle cx="20" cy="20" r="2.300" fill="#333" />
      <path d="m29 12.500 6-3.500v6" stroke="#e07070" strokeWidth="3" fill="none" />
    </>,
  },
  {
    name: 'everything', open: 'one',
    art: <>
      <path d="m17 25-11 11" stroke="#a04a00" strokeWidth="6" strokeLinecap="round" />
      <circle cx="23" cy="16.500" r="10.800" fill="none" stroke="#a04a00" strokeWidth="5.500" />
      <path d="m17 24-11 11.500" stroke="#ff8000" strokeWidth="4" strokeLinecap="round" />
      <circle cx="23" cy="16.500" r="10.800" fill="none" stroke="#ff8000" strokeWidth="4" />
    </>,
  },
  {
    name: 'word', open: 'one',
    art: <>
      <path d="M10 4h27v8H10z" fill="#41a5ee" />
      <path d="M10 12h27v8H10z" fill="#2b7cd3" />
      <path d="M10 20h27v8H10z" fill="#185abd" />
      <path d="M10 28h27v8H10z" fill="#103f91" />
      <rect x="2" y="11" width="18" height="18" rx="1.500" fill="#185abd" />
      <text x="11" y="25" textAnchor="middle" fontSize="13" fontWeight="bold" fontFamily="Open Sans" fill="#fff">W</text>
    </>,
  },
  {
    name: 'powerpoint', open: 'one', active: true,
    art: <>
      <circle cx="20" cy="20" r="16" fill="#d35230" />
      <path d="M20 4a16 16 0 0 1 16 16H20z" fill="#ff8f6b" />
      <path d="M20 4v16H4A16 16 0 0 1 20 4z" fill="#ed6c47" />
      <rect x="1" y="11" width="18" height="18" rx="1.500" fill="#c43e1c" />
      <text x="9.500" y="25" textAnchor="middle" fontSize="13.500" fontWeight="bold" fontFamily="Open Sans" fill="#fff">P</text>
    </>,
  },
];

function Taskbar() {
  return (
    <div className="flex h-[60px] items-stretch bg-[linear-gradient(90deg,#151515_0,#1a1a1a_340px,#505050_362px,#555_400px,#555_1515px,#4a4a4a_1522px,#141414_1536px,#121212_1740px,#1d1d1d_1800px,#141414_1920px)] text-white">
      <div className="flex w-[72px] items-center justify-center">
        <Ic b={[24, 1038, 24, 24]}>
          <path d="M24 1041.300l10-1.300v9.500H24zM35.500 1039.700l12.500-1.700v11.500H35.500zM24 1050.500h10v9.700l-10-1.400zM35.500 1050.500H48v11.700l-12.500-1.800z" fill="#fff" />
        </Ic>
      </div>
      <div className="flex w-[72px] items-center justify-center">
        <Ic b={[96, 1037, 24, 26]}>
          <circle cx="111.500" cy="1046.500" r="8.500" stroke="#fff" strokeWidth="1.400" />
          <path d="m105.500 1052.500-9.500 9.500" stroke="#fff" strokeWidth="1.400" />
        </Ic>
      </div>
      <div className="flex w-[72px] items-center justify-center">
        <Ic b={[168, 1037, 24, 26]}>
          <path d="M168.500 1038v3.500h15V1038M168.500 1044.500h15v11h-15zM168.500 1062v-3.500h15v3.500M190.500 1038v4M190.500 1050v11.500" stroke="#fff" strokeWidth="1.200" />
          <path d="M189 1045h3v3.500h-3z" fill="#fff" />
        </Ic>
      </div>
      <div className="w-[3px]" />
      {APPS.map((a) => (
        <div key={a.name} className={`flex shrink-0 flex-col items-center ${a.active ? 'ml-[2px] w-[73px] bg-[#333]' : 'w-[75px]'}`}>
          <svg width="40" height="40" viewBox="0 0 40 40" className="mt-[10px]">{a.art}</svg>
          {a.open && (
            <div className={`mt-auto flex h-[3px] ${a.active ? 'w-full' : 'w-[61px]'}`}>
              <div className={`h-full bg-[#76b9ed] ${a.open === 'many' ? 'w-[48px]' : 'w-full'}`} />
              {a.open === 'many' && <div className="h-full flex-1 bg-[#5b8db5]" />}
            </div>
          )}
        </div>
      ))}
      <div className="flex-1" />
      <div className="flex items-center">
        <Ic b={[1430, 1038, 20, 24]}><path d="m1431.500 1054.500 8.500-9 8.500 9" stroke="#fff" strokeWidth="1.300" /></Ic>
        <Ic b={[1466, 1037, 20, 26]} className="ml-4">
          <rect x="1467" y="1038" width="18" height="24" rx="8.500" fill="#0a84ff" />
          <path d="m1471.500 1045.500 9 9-4.500 4.500v-18l4.500 4.500-9 9" stroke="#fff" strokeWidth="1.500" />
        </Ic>
        <Ic b={[1498, 1037, 28, 26]} className="ml-3">
          <path d="M1500.500 1041.500 1523.500 1038v23l-23-3z" stroke="#fff" strokeWidth="1.200" />
          <path d="M1507 1049q3-6 8-2M1515 1043.500v4h-4M1514 1052q-3 5-7 2M1507 1057v-4h4" stroke="#fff" strokeWidth="1.200" />
          <circle cx="1518.500" cy="1056.500" r="5.500" fill="#ff9500" />
        </Ic>
        <Ic b={[1536, 1037, 26, 26]} className="ml-2.5">
          <path d="M1537.500 1046.500h4l6.500-6v19l-6.500-6h-4z" stroke="#fff" strokeWidth="1.200" />
          <path d="M1550.500 1046q2 4 0 8M1553.500 1043.500q4 6.500 0 13" stroke="#fff" strokeWidth="1.200" />
          <path d="M1556.500 1041q6 9 0 18" stroke="#777" strokeWidth="1.200" />
        </Ic>
        <Ic b={[1571, 1037, 26, 26]} className="ml-[9px]">
          <path d="M1577.500 1046.500h16v10h-16z" stroke="#fff" strokeWidth="1.200" />
          <path d="M1579.500 1048h13v7.500h-13zM1594 1049.500h2v4h-2z" fill="#fff" />
          <path d="M1573.500 1040v3M1577.500 1040v3M1572.500 1043.500h6v3l-3 2.500-3-2.500zM1575.500 1049v6h3" stroke="#fff" strokeWidth="1.200" />
        </Ic>
        <Ic b={[1607, 1037, 26, 26]} className="ml-2.5">
          <path d="M1614 1042.500h17.500v12.500h-19v-7M1620.500 1055v3.500M1615 1059.500h12M1608.500 1041.500h5v6h-5zM1611 1048v8" stroke="#fff" strokeWidth="1.200" />
        </Ic>
        <span className="ml-[12px] w-5 text-center text-[19px] leading-6 font-medium">中</span>
        <Ic b={[1685, 1037, 26, 26]} className="ml-[20px]">
          <rect x="1686" y="1038" width="24" height="24" rx="4" fill="#3590fb" />
          <ellipse cx="1697.500" cy="1049.500" rx="5.800" ry="6.500" stroke="#fff" strokeWidth="2.800" />
          <circle cx="1704" cy="1056" r="2.300" fill="#8fe020" />
        </Ic>
        <div className="ml-[14px] flex w-[114px] flex-col items-center pb-px leading-[28px]">
          <Fit w={46}>17:41</Fit>
          <Fit w={94}>2021/7/14</Fit>
        </div>
        <Ic b={[1856, 1037, 28, 26]} className="ml-[17px]">
          <path d="M1858 1038h24v18h-14v5l-5-5h-5z" fill="#fff" />
          <path d="M1862 1043.500h16M1862 1047.500h16M1862 1051.500h9" stroke="#222" strokeWidth="1.200" />
          <path d="M1877 1050q6 6-4 9 3 4 7 1.500 5-5-3-10.500z" fill="#1a1a1a" stroke="#fff" />
        </Ic>
        <div className="mr-1.5 ml-[29px] h-[60px] w-px bg-[#6a6a6a]" />
      </div>
    </div>
  );
}

export default function App() {
  return (
    <div className="flex h-[1080px] w-[1920px] flex-col overflow-hidden bg-[#b7472a] font-['Noto_Sans','Noto_Sans_CJK_SC',sans-serif] text-[18px]">
      <TitleBar />
      <Tabs />
      <Ribbon />
      <Workspace />
      <StatusBar />
      <Taskbar />
    </div>
  );
}
